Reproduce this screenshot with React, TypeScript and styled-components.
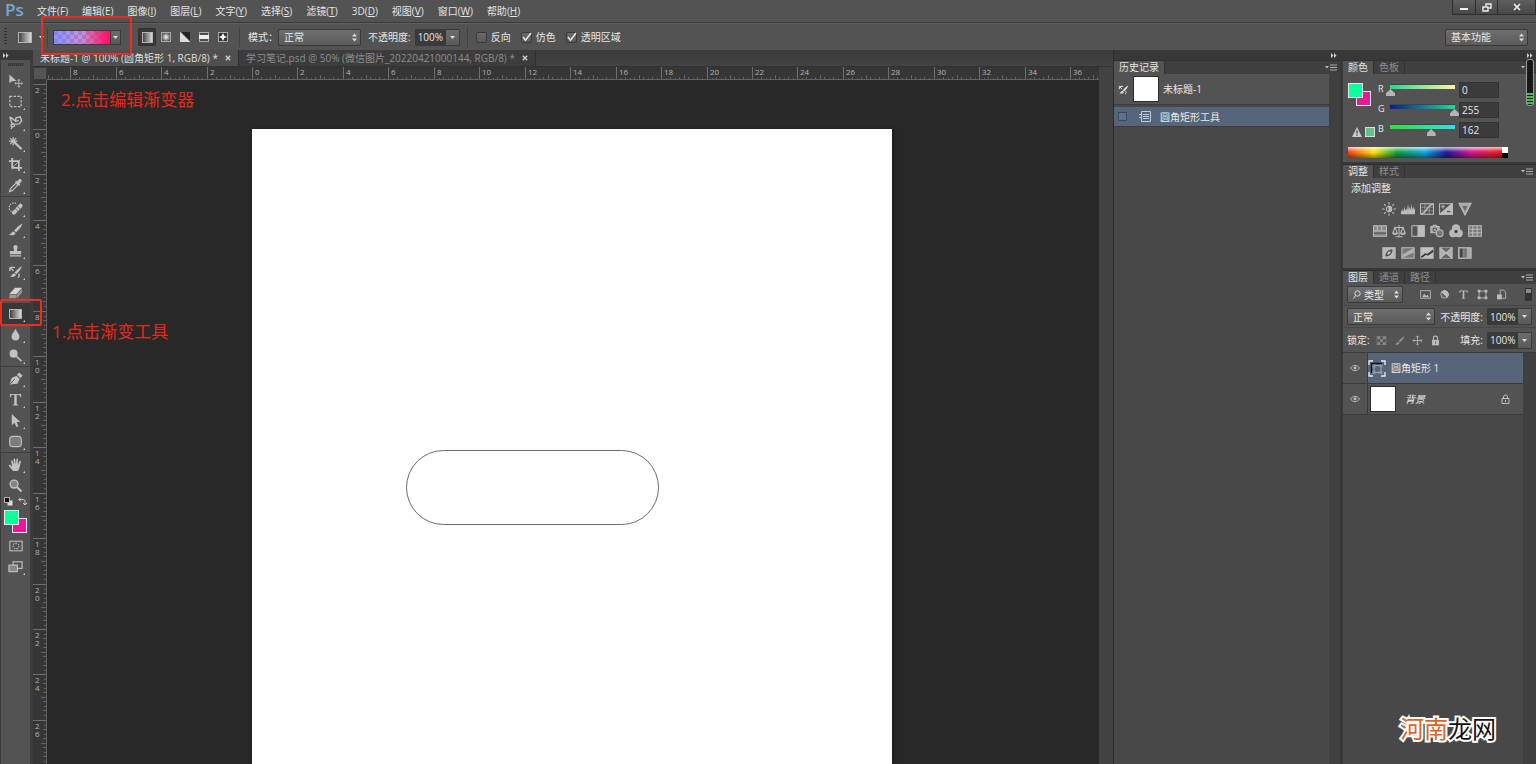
import React, { useEffect, useRef, useState } from 'react';
import styled, { createGlobalStyle, css } from 'styled-components';

const GlobalStyle = createGlobalStyle`
  * { box-sizing: border-box; }
  html, body, #root { height: 100%; }
  body {
    margin: 0;
    background: #282828;
    overflow: hidden;
  }
  body, button, input, select {
    font-family: 'Open Sans', 'Noto Sans CJK SC', sans-serif;
    font-size: 10px;
    line-height: 14px;
    color: #e8e8e8;
  }
  button { padding: 0; border: 0; background: none; }
  svg { display: block; }
`;

/* ---------- page frame ---------- */

const Screen = styled.div`
  position: relative;
  display: flex;
  flex-direction: column;
  min-height: 100vh;
  height: 100%;
  overflow: hidden;
`;

const MenuBar = styled.header`
  display: flex;
  align-items: flex-start;
  height: 23px;
  flex: none;
  padding-left: 5px;
  background: #535353;
  border-bottom: 1px solid #3a3a3a;
`;

const Logo = styled.span`
  width: 27px;
  margin-right: 5px;
  font-family: 'Open Sans', sans-serif;
  font-size: 17px;
  font-weight: 600;
  line-height: 20px;
  color: #78a9d6;
`;

const Menus = styled.nav`
  display: flex;
  gap: 14px;
  flex: 1;
`;

const MenuButton = styled.button`
  line-height: 22px;
  color: #e4e4e4;
  white-space: nowrap;
`;

const WindowControls = styled.div`
  display: flex;
  height: 15px;
  border: 1px solid #2e2e2e;
  border-top: 0;
`;

const WindowButton = styled.button<{ $wide?: boolean }>`
  display: grid;
  place-items: center;
  width: ${(p) => (p.$wide ? 38 : 22)}px;
  background: linear-gradient(#5e5e5e, #484848);
  & + & { border-left: 1px solid #2e2e2e; }
`;

const OptionsBar = styled.div`
  display: flex;
  align-items: center;
  height: 27px;
  flex: none;
  padding: 0 8px 0 4px;
  background: #535353;
  border-top: 1px solid #5f5f5f;
`;

const Divider = styled.i<{ $before: number; $after: number }>`
  width: 1px;
  height: 20px;
  margin: 0 ${(p) => p.$after}px 0 ${(p) => p.$before}px;
  background: #424242;
`;

const Grip = styled.i`
  width: 3px;
  height: 18px;
  margin-right: 11px;
  background: repeating-linear-gradient(#333 0 1px, #535353 1px 3px);
`;

const ToolPreset = styled.button`
  display: flex;
  align-items: center;
  gap: 7px;
`;

const GradientPicker = styled.div`
  display: flex;
  height: 15px;
  border: 1px solid #3a3a3a;
`;

const GradientButton = styled.button`
  width: 56px;
  background:
    linear-gradient(90deg, rgba(118, 130, 255, 0.85), rgba(180, 110, 210, 0.75) 50%, #fb1a6c 92%, #ff1466),
    repeating-conic-gradient(#fff 0 25%, #9a9a9a 0 50%) 0 0 / 8px 8px;
`;

const ArrowButton = styled.button<{ $w: number }>`
  display: grid;
  place-items: center;
  flex: none;
  width: ${(p) => p.$w}px;
  background: linear-gradient(#6c6c6c, #5a5a5a);
  border-left: 1px solid #3a3a3a;
`;

const StyleButtons = styled.div`
  display: flex;
  margin-left: 17px;
  gap: 1px;
`;

const StyleButton = styled.button<{ $active?: boolean }>`
  display: grid;
  place-items: center;
  width: 18px;
  height: 18px;
  border-radius: 2px;
  ${(p) => p.$active && css`background: #383838; box-shadow: inset 0 0 0 1px #303030;`}
`;

const FieldLabel = styled.label`
  white-space: nowrap;
`;

const OptionLabel = styled(FieldLabel)`
  margin: 0 4px 0 7px;
`;

const SelectFrame = styled.span<{ $w: number }>`
  display: grid;
  align-items: center;
  flex: none;
  width: ${(p) => p.$w}px;
  height: 17px;
  border: 1px solid #3a3a3a;
  border-radius: 2px;
  background: linear-gradient(#6e6e6e, #5b5b5b);
  > * { grid-area: 1 / 1; }
  > svg { justify-self: end; margin-right: 2px; pointer-events: none; }
  > svg.lead { justify-self: start; margin-left: 5px; }
`;

const SelectBox = styled.select<{ $pad: number }>`
  appearance: none;
  width: 100%;
  height: 15px;
  padding: 0 0 0 ${(p) => p.$pad}px;
  border: 0;
  background: none;
`;

const ValueFrame = styled.span`
  display: flex;
  flex: none;
  height: 17px;
  border: 1px solid #3a3a3a;
  border-radius: 1px;
`;

const ValueInput = styled.input`
  width: 29px;
  padding: 0 0 0 2px;
  border: 0;
  background: #3a3a3a;
`;

const CheckLabel = styled.label`
  display: flex;
  align-items: center;
  gap: 4px;
  margin-right: 10px;
  white-space: nowrap;
`;

const CheckFrame = styled.span`
  display: grid;
  > * { grid-area: 1 / 1; }
  > svg { pointer-events: none; }
`;

const CheckInput = styled.input`
  appearance: none;
  width: 11px;
  height: 11px;
  margin: 0;
  border: 1px solid #3a3a3a;
  border-radius: 2px;
  background: linear-gradient(#6a6a6a, #595959);
`;

const Spacer = styled.i`
  flex: 1;
`;

const Workspace = styled.div`
  display: flex;
  flex: 1;
  min-height: 0;
`;

/* ---------- tool bar ---------- */

const ToolColumn = styled.aside`
  display: flex;
  flex-direction: column;
  width: 33px;
  flex: none;
  background: #3c3c3c;
`;

const Strip = styled.div<{ $end?: boolean }>`
  display: flex;
  align-items: center;
  justify-content: ${(p) => (p.$end ? 'flex-end' : 'flex-start')};
  height: 10px;
  flex: none;
  padding: 0 3px;
  background: #383838;
`;

const ToolPanel = styled.div`
  flex: 1;
  display: flex;
  flex-direction: column;
  align-items: center;
  margin: 0 3px 0 1px;
  padding-top: 3px;
  background: #535353;
  overflow: hidden;
`;

const ToolGrip = styled.i`
  width: 16px;
  height: 3px;
  margin-bottom: 4px;
  background: repeating-linear-gradient(90deg, #333 0 1px, #474747 1px 2px);
`;

const ToolGroup = styled.div`
  align-self: stretch;
  & + & { border-top: 1px solid #404040; padding-top: 1px; }
`;

const ToolButton = styled.button<{ $active?: boolean }>`
  position: relative;
  display: grid;
  place-items: center;
  width: 100%;
  height: 21px;
  color: #c2c2c2;
  ${(p) => p.$active && css`background: #383838;`}
`;

const Flyout = styled.i`
  position: absolute;
  right: 5px;
  bottom: 2px;
  border: 1px solid #d0d0d0;
  border-top-color: transparent;
  border-left-color: transparent;
`;

const MiniRow = styled.div`
  display: flex;
  gap: 5px;
  padding: 1px 0 4px;
`;

const SwatchPair = styled.div`
  position: relative;
  flex: none;
  width: 23px;
  height: 23px;
`;

const ToolSwatches = styled(SwatchPair)`
  margin-bottom: 2px;
`;

const Swatch = styled.button<{ $color: string; $back?: boolean }>`
  position: absolute;
  ${(p) => (p.$back ? 'right: 0; bottom: 0;' : 'left: 0; top: 0; z-index: 1;')}
  width: 15px;
  height: 15px;
  border: 1px solid #e8e8e8;
  background: ${(p) => p.$color};
`;

/* ---------- document ---------- */

const DocumentColumn = styled.main`
  display: flex;
  flex-direction: column;
  flex: 1;
  min-width: 0;
  background: #424242;
`;

const TabBar = styled.div`
  display: flex;
  height: 17px;
  flex: none;
  background: linear-gradient(#3a3a3a, #424242);
  border-bottom: 1px solid #323232;
`;

const DocTab = styled.div<{ $active?: boolean }>`
  display: flex;
  align-items: center;
  gap: 7px;
  padding: 0 7px;
  border-right: 1px solid #303030;
  background: ${(p) => (p.$active ? '#4f4f4f' : '#3c3c3c')};
  color: ${(p) => (p.$active ? '#dedede' : '#8d8d8d')};
  white-space: nowrap;
`;

const DocTitle = styled.span`
  line-height: 16px;
`;

const Stage = styled.div`
  flex: 1;
  min-height: 0;
  display: grid;
  grid-template: 13px 1fr / 14px 1fr;
  margin-right: 14px;
  background: #282828;
`;

const RulerCorner = styled.i`
  background: #555;
  border: 1px solid #3a3a3a;
`;

const RulerFrame = styled.div`
  min-width: 0;
  min-height: 0;
  overflow: hidden;
  background: #363636;
`;

const CanvasArea = styled.div`
  min-width: 0;
  min-height: 0;
  overflow: hidden;
  display: flex;
  padding: 49px 0 0 205px;
`;

const Page = styled.div`
  position: relative;
  flex: none;
  width: 640px;
  background: #fff;
  box-shadow: 1px 0 3px #161616;
`;

const ShapePath = styled.svg`
  position: absolute;
  left: 154px;
  top: 321px;
`;

/* ---------- panels ---------- */

const Dock = styled.aside`
  display: flex;
  flex: none;
  gap: 3px;
  border-left: 1px solid #2c2c2c;
  background: #383838;
`;

const DockColumn = styled.div<{ $w: number }>`
  display: flex;
  flex-direction: column;
  width: ${(p) => p.$w}px;
`;

const PanelTabs = styled.div<{ $gap?: boolean }>`
  display: flex;
  height: 14px;
  flex: none;
  margin-top: ${(p) => (p.$gap ? 2 : 0)}px;
  background: #3f3f3f;
  border-top: 1px solid #303030;
`;

const PanelTab = styled.button<{ $active?: boolean }>`
  padding: 0 5px;
  line-height: 13px;
  border-right: 1px solid #333;
  background: ${(p) => (p.$active ? '#535353' : 'none')};
  color: ${(p) => (p.$active ? '#e4e4e4' : '#8f8f8f')};
`;

const PanelMenu = styled.button`
  margin: 0 3px 0 auto;
`;

const HistoryBody = styled.div`
  flex: 1;
  padding-right: 11px;
  background: linear-gradient(90deg, #484848 calc(100% - 11px), #404040 0);
`;

const HistoryRow = styled.div<{ $active?: boolean }>`
  display: flex;
  align-items: center;
  height: ${(p) => (p.$active ? 20 : 31)}px;
  margin-bottom: 2px;
  padding-left: 4px;
  border-bottom: 1px solid #3c3c3c;
  background: ${(p) => (p.$active ? '#56657a' : '#535353')};
`;

const HistorySource = styled.button<{ $empty?: boolean }>`
  width: ${(p) => (p.$empty ? 9 : 11)}px;
  height: ${(p) => (p.$empty ? 9 : 11)}px;
  ${(p) => p.$empty && css`border: 1px solid #3c4a5e; background: #607087;`}
`;

const Thumb = styled.i`
  width: 26px;
  height: 26px;
  border: 1px solid #2c2c2c;
  background: #fff;
`;

const SnapshotThumb = styled(Thumb)`
  margin: 0 4px;
`;

const StateIcon = styled.svg`
  margin: 0 9px 0 12px;
`;

const ColorPanel = styled.section`
  display: grid;
  grid-template-columns: 23px 1fr;
  column-gap: 7px;
  padding: 9px 28px 4px 5px;
  background: #535353;
`;

const SwatchColumn = styled.div`
  display: flex;
  flex-direction: column;
  justify-content: space-between;
  height: 54px;
`;

const GamutRow = styled.div`
  display: flex;
  align-items: center;
  gap: 3px;
  margin-left: 4px;
  > * { flex: none; }
`;

const GamutSwatch = styled.button`
  width: 10px;
  height: 10px;
  border: 1px solid #ddd;
  background: #66c08c;
`;

const Channels = styled.div`
  display: flex;
  flex-direction: column;
  margin-top: -1px;
  gap: 4px;
`;

const ChannelRow = styled.div`
  display: flex;
  align-items: flex-start;
  height: 16px;
`;

const ChannelLabel = styled.label`
  width: 12px;
  font-size: 9px;
  line-height: 13px;
`;

const SliderBox = styled.span`
  width: 65px;
  margin: 2px 4px 0 0;
`;

const SliderBar = styled.i<{ $from: string; $to: string }>`
  display: block;
  height: 5px;
  background: linear-gradient(90deg, ${(p) => p.$from}, ${(p) => p.$to});
  border-top: 1px solid #444;
`;

const Slider = styled.input`
  appearance: none;
  display: block;
  width: 73px;
  height: 7px;
  margin: 0 -4px;
  background: none;
  &::-webkit-slider-thumb {
    appearance: none;
    width: 9px;
    height: 7px;
    background: #b4b4b4;
    clip-path: polygon(50% 0, 100% 60%, 100% 100%, 0 100%, 0 60%);
  }
`;

const ChannelInput = styled.input`
  width: 40px;
  height: 16px;
  padding: 0 0 0 2px;
  border: 1px solid #333;
  background: #3b3b3b;
`;

const Spectrum = styled.div`
  grid-column: 1 / -1;
  display: flex;
  height: 11px;
  margin-top: 9px;
`;

const SpectrumRamp = styled.i`
  flex: 1;
  background:
    linear-gradient(rgba(255, 255, 255, 0.75), rgba(255, 255, 255, 0) 45%, rgba(0, 0, 0, 0) 50%, rgba(0, 0, 0, 0.45)),
    linear-gradient(90deg, #f5401e, #f8e80a 17%, #10a040 32%, #12a6e0 50%, #241c98 64%, #d81492 80%, #e8203a 93%, #e01818);
`;

const SpectrumEnds = styled.i`
  width: 6px;
  background: linear-gradient(#fff 50%, #000 50%);
`;

const AdjustPanel = styled.section`
  padding: 3px 8px 8px 8px;
  background: #535353;
`;

const AdjustTitle = styled.h2`
  margin: 0 0 7px;
  font-size: 10px;
  font-weight: 400;
  line-height: 14px;
`;

const AdjustRow = styled.div<{ $inset: number }>`
  display: flex;
  gap: 5px;
  padding-left: ${(p) => p.$inset}px;
  margin-bottom: 8px;
  &:last-child { margin-bottom: 0; }
`;

const IconButton = styled.button`
  display: grid;
  place-items: center;
  flex: none;
  width: 14px;
  height: 14px;
  color: #bcbcbc;
`;

const LayerTools = styled.div`
  display: flex;
  align-items: center;
  height: 22px;
  flex: none;
  padding: 0 4px;
  background: #535353;
  border-bottom: 1px solid #484848;
`;

const LockTools = styled(LayerTools)`
  height: 25px;
  border-bottom-color: #3a3a3a;
`;

const IconStrip = styled.div<{ $before: number; $gap: number }>`
  display: flex;
  gap: ${(p) => p.$gap}px;
  margin-left: ${(p) => p.$before}px;
`;

const FilterSwitch = styled.button`
  width: 7px;
  height: 13px;
  margin: 0 0 0 auto;
  border: 1px solid #333;
  background: linear-gradient(#8a8a8a 40%, #333 40%);
`;

const LayerLabel = styled(FieldLabel)`
  margin: 0 4px 0 auto;
`;

const LayerList = styled.div`
  flex: 1;
  padding-right: 13px;
  background: linear-gradient(90deg, #484848 calc(100% - 13px), #404040 0);
`;

const LayerRow = styled.div<{ $active?: boolean }>`
  display: flex;
  align-items: center;
  height: 31px;
  border-bottom: 1px solid #3a3a3a;
  background: ${(p) =>
    p.$active ? 'linear-gradient(90deg, #535353 24px, #56657a 24px)' : '#535353'};
`;

const EyeButton = styled.button`
  display: grid;
  place-items: center;
  width: 25px;
  height: 30px;
  border-right: 1px solid #3a3a3a;
`;

const LayerName = styled.span<{ $italic?: boolean }>`
  flex: 1;
  margin-left: ${(p) => (p.$italic ? 9 : 5)}px;
  font-style: ${(p) => (p.$italic ? 'italic' : 'normal')};
`;

const LayerLock = styled.i`
  margin-right: 13px;
`;

const LayerThumb = styled(Thumb)`
  margin-left: 2px;
`;

/* ---------- overlays ---------- */

const Highlight = styled.div<{ $x: number; $y: number; $w: number; $h: number }>`
  position: absolute;
  z-index: 5;
  left: ${(p) => p.$x}px;
  top: ${(p) => p.$y}px;
  width: ${(p) => p.$w}px;
  height: ${(p) => p.$h}px;
  border: 2px solid #ea2f22;
  border-radius: 2px;
  pointer-events: none;
`;

const Note = styled.p<{ $x: number; $y: number }>`
  position: absolute;
  z-index: 5;
  left: ${(p) => p.$x}px;
  top: ${(p) => p.$y}px;
  margin: 0;
  font-size: 17px;
  line-height: 24px;
  color: #e5281d;
`;

const Meter = styled.div`
  position: absolute;
  z-index: 5;
  right: 2px;
  top: 59px;
  width: 8px;
  height: 47px;
  border: 1px solid #9a9a9a;
  border-radius: 3px;
  background:
    repeating-linear-gradient(rgba(0, 0, 0, 0) 0 2px, #1c1c1c 2px 3px),
    linear-gradient(#161616 32px, #3fc152 32px);
`;

const Watermark = styled.div`
  position: absolute;
  z-index: 5;
  right: 40px;
  bottom: 19px;
  font-size: 24px;
  line-height: 32px;
  color: #111;
  -webkit-text-stroke: 4px #fff;
  stroke-linejoin: round;
  paint-order: stroke fill;
  > b { font-weight: 400; color: #e2631f; }
`;

/* ---------- small drawings ---------- */

const Icon = ({ size = 16, children }: { size?: number; children: React.ReactNode }) => (
  <svg width={size} height={size} viewBox="0 0 16 16" fill="none" stroke="currentColor" strokeWidth="1.2" aria-hidden="true">
    {children}
  </svg>
);

const DownArrow = () => (
  <svg width="5" height="3" viewBox="0 0 5 3" aria-hidden="true"><path d="M0 0h5L2.5 3z" fill="#ddd" /></svg>
);

const UpDown = () => (
  <svg width="7" height="9" viewBox="0 0 7 9" aria-hidden="true"><path d="M1 3.5h5L3.5.5zM1 5.5h5L3.5 8.5z" fill="#ddd" /></svg>
);

const DoubleChevron = () => (
  <svg width="6" height="5" viewBox="0 0 6 5" aria-hidden="true"><path d="M0 0l2.5 2.5L0 5zM3 0l2.5 2.5L3 5z" fill="#ccc" /></svg>
);

const PanelMenuIcon = () => (
  <svg width="12" height="7" viewBox="0 0 12 7" aria-hidden="true">
    <path d="M0 2h4L2 4.5z" fill="#bbb" />
    <path d="M5 1h7M5 3.5h7M5 6h7" stroke="#aaa" strokeWidth="1" />
  </svg>
);

const CloseMark = () => (
  <svg width="6" height="6" viewBox="0 0 6 6" aria-hidden="true"><path d="M.8.8l4.4 4.4M5.2.8L.8 5.2" stroke="#d0d0d0" strokeWidth="1.3" /></svg>
);

const GradientGlyph = ({ id, w = 14, h = 11 }: { id: string; w?: number; h?: number }) => (
  <svg width={w} height={h} viewBox={`0 0 ${w} ${h}`} aria-hidden="true">
    <defs><linearGradient id={id}><stop offset="0" stopColor="#3c3c3c" /><stop offset="1" stopColor="#e0e0e0" /></linearGradient></defs>
    <rect x=".5" y=".5" width={w - 1} height={h - 1} fill={`url(#${id})`} stroke="#b4b4b4" />
  </svg>
);

const HistoryBrush = () => (
  <>
    <path d="M15 2c-3.500 2-6 4.500-8 7.300l1.800 1.500C11.500 8.500 13.800 5.500 15 2z" fill="currentColor" stroke="none" />
    <path d="M6.500 10c-2.200 0-2 2.500-4.500 3 2.500 1.500 6 .8 6.500-1.500z" fill="currentColor" stroke="none" />
    <path d="M2 3.500h5.500M2 3.500v4M2.500 4l3.500 3.500M11 10.500c1.500 1 1.200 3-.5 4" strokeWidth="1.400" />
  </>
);

const BrushShape = () => (
  <>
    <path d="M15.500 1.500C11 4 8.300 6.700 6.600 9.200l2 1.600C11.500 8.500 14 5.500 15.500 1.500z" fill="currentColor" stroke="none" />
    <path d="M6 10c-2.200 0-2 2.800-5 3.200C4 15 7.500 14 8 11.600z" fill="currentColor" stroke="none" />
  </>
);

type Tool = { name: string; flyout?: boolean; active?: boolean; art: React.ReactNode };

const toolGroups: Tool[][] = [
  [
    { name: '移动工具', art: <><path d="M1.500 1.500v9.500l2.500-2.300 5-.5z" fill="currentColor" stroke="none" /><path d="M11.500 7v8M7.500 11h8M10.300 8.200l1.200-1.400 1.200 1.400M10.300 13.800l1.200 1.400 1.200-1.400M8.700 9.800L7.300 11l1.400 1.200M14.300 9.800l1.400 1.200-1.400 1.200" strokeWidth=".9" /></> },
    { name: '矩形选框工具', flyout: true, art: <rect x="2" y="2.500" width="12" height="11" strokeDasharray="2.500 1.500" strokeWidth="1.300" /> },
    { name: '套索工具', flyout: true, art: <path d="M2 2l2.500 8L12 9.500l2.500-3.500L13 2 8.500 3 8 6.500 2 2M5.500 9.500c-3 0-3 3-.5 3s2.500-3 .5-3M4.500 12.500L3.500 15M8.500 6.500l3-.5" strokeWidth="1.500" /> },
    { name: '魔棒工具', flyout: true, art: <><path d="M6.500 6.500l8 7.500" strokeWidth="2.200" /><path d="M5.500 1v9M1 5.500h9M2.300 2.300l6.400 6.400M8.700 2.300L2.300 8.700" strokeWidth="1.300" /></> },
    { name: '裁剪工具', flyout: true, art: <><path d="M4.500 1v10.500H15M1 4.500h10.500V15" strokeWidth="1.900" /><path d="M5 11l8.500-8.500" strokeWidth=".8" /></> },
    { name: '吸管工具', flyout: true, art: <><path d="M1.500 14.500l1-3 6-6 2 2-6 6z" /><path d="M7.500 4l4.500 4.500 1.200-1.200-1-1.200 2-2c1.400-1.800-.9-3.900-2.600-2.400l-2 1.900L8.700 2.800z" fill="currentColor" stroke="none" /></> },
  ],
  [
    { name: '污点修复画笔', flyout: true, art: <><path d="M4.500 11.500l8-8.500c1.200-1 4 1.400 2.800 3L7.500 14.200c-1.600 1.300-4.400-1-3-2.700z" fill="currentColor" stroke="none" /><path d="M7.500 8l3.500 3.300M10 5.500L13.200 9" stroke="#535353" strokeWidth=".8" /><path d="M8.500 2.500C5 .5 1 4 1.300 7.500c.2 2 1.200 3 2.500 3.500" strokeDasharray="1.500 1.200" /></> },
    { name: '画笔工具', flyout: true, art: <BrushShape /> },
    { name: '仿制图章', flyout: true, art: <path d="M6.500 8.500L5.800 5C5.300 1.200 10.700 1.200 10.200 5l-.7 3.500H14V12H2V8.500zM2 13h12v1.500H2z" fill="currentColor" stroke="none" /> },
    { name: '历史记录画笔', flyout: true, art: <HistoryBrush /> },
    { name: '橡皮擦工具', flyout: true, art: <><path d="M1.500 9.500L7.500 3H15L9.300 9.500z" fill="#d4d4d4" stroke="none" /><path d="M1.500 10H9v4H1.500zM9.500 10.300L15 4v4l-5.500 6z" fill="#989898" stroke="none" /></> },
    { name: '渐变工具', flyout: true, active: true, art: null },
    { name: '模糊工具', flyout: true, art: <path d="M8 1.500C7 5 3.800 7 3.800 10.200a4.200 4.200 0 008.400 0C12.200 7 9 5 8 1.500z" fill="currentColor" stroke="none" /> },
    { name: '减淡工具', flyout: true, art: <><circle cx="6" cy="6" r="4.300" fill="currentColor" stroke="none" /><path d="M9 9l5.500 5" strokeWidth="1.800" /></> },
  ],
  [
    { name: '钢笔工具', flyout: true, art: <><path d="M1.500 14.500L4 7.500l5-2.500 3.500 3.500-2.500 5z" fill="currentColor" stroke="none" /><path d="M2 14l5-5" stroke="#444" strokeWidth=".9" /><path d="M9.500 4l2.500-2.500 3.500 3.500-2.500 2.500z" fill="currentColor" stroke="none" /></> },
    { name: '横排文字工具', flyout: true, art: <path d="M2 2h12v3.500h-.8C12.900 3.600 12 3 9.300 3v9.500c0 .9.500 1.100 1.700 1.200v.6H5v-.6c1.200-.1 1.700-.3 1.700-1.200V3C4 3 3.100 3.600 2.800 5.500H2z" fill="currentColor" stroke="none" /> },
    { name: '路径选择工具', flyout: true, art: <path d="M4 1v12.300l2.900-2.900 2.100 4.500 2.100-.9-2-4.500h4z" fill="currentColor" stroke="none" /> },
    { name: '圆角矩形工具', flyout: true, art: <rect x="1.800" y="2.500" width="12.400" height="11" rx="3.500" fill="#7c7c7c" /> },
  ],
  [
    { name: '抓手工具', flyout: true, art: <path d="M5.500 15L1 9.500c-.6-1 .7-1.700 1.500-1l2 1.700L3.300 4.500c-.2-1.200 1.300-1.400 1.600-.3L6.300 8 6 2.500c0-1.300 1.600-1.300 1.700 0L8.300 8l.7-5.700c.2-1.200 1.700-1 1.600.2L10.300 8.500l1.800-4c.5-1 1.900-.5 1.600.6-1 3.500-1 7-3.200 9.900z" fill="currentColor" stroke="none" /> },
    { name: '缩放工具', art: <><circle cx="6.500" cy="6.500" r="4.200" fill="#858585" strokeWidth="1.500" /><path d="M9.800 9.800l4.700 4.500" strokeWidth="2.300" /></> },
  ],
];

const adjustRows: { inset: number; items: [string, React.ReactNode][] }[] = [
  {
    inset: 31,
    items: [
      ['亮度/对比度', <><circle cx="8" cy="8" r="3" /><path d="M8 5v6a3 3 0 000-6z" fill="currentColor" /><path d="M8 0v3M8 13v3M0 8h3M13 8h3M2.300 2.300l2 2M11.700 11.700l2 2M2.300 13.700l2-2M11.700 4.300l2-2" /></>],
      ['色阶', <path d="M0 14V9l1 2 1-4 1 4 1-6 1 5 1-3 1 3 1-8 1 7 1-4 1 4 1-7 1 7 1-4 1 4 1-3v8z" fill="currentColor" stroke="none" />],
      ['曲线', <><rect x=".6" y="2" width="14.800" height="12" /><path d="M.6 6h14.800M.6 10h14.800M5.500 2v12M10.500 2v12" strokeWidth=".6" /><path d="M1 13.500C8 13 8 3 15 2.500" strokeWidth="1.600" /></>],
      ['曝光度', <><rect x=".6" y="2" width="14.800" height="12" /><path d="M15 2v12H1z" fill="currentColor" /><path d="M2.500 5.500h4M4.500 3.500v4" /><path d="M9 11h4" stroke="#444" /></>],
      ['自然饱和度', <><path d="M1 1.500h14L8 15z" fill="#a8a8a8" /><path d="M5 4.500h6L8 10.500z" fill="#6a6a6a" stroke="none" /></>],
    ],
  },
  {
    inset: 22,
    items: [
      ['色相/饱和度', <><rect x=".6" y="2" width="14.800" height="12" fill="#8a8a8a" /><path d="M1 8h14M5 2v6M10 2v6" /><path d="M1 10.500h14" stroke="#666" strokeWidth="2" /></>],
      ['色彩平衡', <path d="M8 1v13M4 14.500h8M2.500 4h11M3.500 4L.8 10.500h5.400zM12.500 4l-2.700 6.500h5.400zM1 10.500c.8 2 4.200 2 5 0M10 10.500c.8 2 4.200 2 5 0" />],
      ['黑白', <><rect x="1" y="2" width="14" height="12" /><path d="M8 2h7v12H8z" fill="currentColor" /></>],
      ['照片滤镜', <><path d="M1 3h2l1-1.500h3L8 3h2.500v7H1z" fill="#a8a8a8" /><circle cx="5.500" cy="6.500" r="2" stroke="#555" /><circle cx="11" cy="10.500" r="4" fill="#777" /></>],
      ['通道混合器', <><circle cx="8" cy="5" r="4" fill="#b8b8b8" /><circle cx="4.800" cy="10.500" r="4" fill="#b8b8b8" /><circle cx="11.200" cy="10.500" r="4" fill="#b8b8b8" /><circle cx="8" cy="8.700" r="2" fill="#444" stroke="none" /></>],
      ['颜色查找', <><rect x=".8" y="2" width="14.400" height="12" fill="#777" /><path d="M1 6h14M1 10h14M5.500 2v12M10.500 2v12" /></>],
    ],
  },
  {
    inset: 31,
    items: [
      ['反相', <><rect x="1" y="2" width="14" height="12" fill="#b8b8b8" /><path d="M4 12c0-5 3-8 8-8 0 5-3 8-8 8z" fill="#4a4a4a" stroke="none" /><path d="M6 10c0-2.500 1.500-4 4-4 0 2.500-1.500 4-4 4z" fill="#ccc" stroke="none" /></>],
      ['色调分离', <><rect x="1" y="2" width="14" height="12" fill="#777" /><path d="M1 10L15 2v5L1 14z" fill="#b0b0b0" stroke="none" /></>],
      ['阈值', <><rect x="1" y="2" width="14" height="12" fill="#c0c0c0" /><path d="M1 12l5-4 2 1 7-5v3l-6 4-2-1-4 3H1z" fill="#3c3c3c" stroke="none" /></>],
      ['可选颜色', <><rect x="1" y="2" width="14" height="12" fill="#b0b0b0" /><path d="M2 2h12L8 8zM2 14h12L8 8z" fill="#666" stroke="none" /><path d="M1 2l14 12M15 2L1 14" /></>],
      ['渐变映射', <><path d="M1 2h5v12H1z" fill="#444" /><path d="M6 2h4v12H6z" fill="#777" stroke="none" /><path d="M10 2h5v12h-5z" fill="#aaa" stroke="none" /><rect x="1" y="2" width="14" height="12" /></>],
    ],
  },
];

const filterIcons: [string, React.ReactNode][] = [
  ['像素图层', <><rect x="1" y="2.500" width="14" height="11" /><path d="M3 12l3-5 3 3 2-1.500 2.500 3.500z" fill="currentColor" stroke="none" /></>],
  ['调整图层', <><circle cx="8" cy="8" r="5.500" fill="#666" /><path d="M4 4a5.600 5.600 0 018 8z" fill="currentColor" /></>],
  ['文字图层', <path d="M2 2h12v3.500h-.8C12.900 3.800 12 3.400 9.200 3.400v9.200c0 .8.500 1 1.600 1.100v.6H5.200v-.6c1.100-.1 1.600-.3 1.600-1.100V3.400C4 3.400 3.100 3.800 2.800 5.500H2z" fill="currentColor" stroke="none" />],
  ['形状图层', <><rect x="3" y="3" width="10" height="10" /><path d="M1 1h4v4H1zM11 1h4v4h-4zM1 11h4v4H1zM11 11h4v4h-4z" fill="currentColor" stroke="none" /></>],
  ['智能对象', <><path d="M6 1.500h5l3 3v9H6z" /><path d="M1.500 8h7v7h-7z" fill="currentColor" stroke="none" /></>],
];

const lockIcons: [string, React.ReactNode][] = [
  ['锁定透明像素', <><rect x="1.500" y="2" width="13" height="12" stroke="#777" /><path d="M2 2h4v4H2zM10 2h4v4h-4zM6 6h4v4H6zM2 10h4v4H2zM10 10h4v4h-4z" fill="#8a8a8a" stroke="none" /></>],
  ['锁定图像像素', <g color="#909090"><BrushShape /></g>],
  ['锁定位置', <path d="M8 1.500v13M1.500 8h13M6 3.500l2-2.300 2 2.300M6 12.500l2 2.300 2-2.300M3.500 6L1.200 8l2.300 2M12.500 6l2.300 2-2.300 2" />],
  ['锁定全部', <><path d="M3 7h10v8H3z" fill="currentColor" stroke="none" /><path d="M5 7V4.500a3 3 0 016 0V7" strokeWidth="1.600" /><path d="M8 9.500v3" stroke="#444" /></>],
];

const menus: [string, string][] = [
  ['文件', 'F'], ['编辑', 'E'], ['图像', 'I'], ['图层', 'L'], ['文字', 'Y'], ['选择', 'S'],
  ['滤镜', 'T'], ['3D', 'D'], ['视图', 'V'], ['窗口', 'W'], ['帮助', 'H'],
];

/* Rulers count every two centimetres; one step is 500 px over 11 steps. */
const STEP = 500 / 11;

/* Keeps the marks limited to the part of the ruler that is on screen. */
function useLength(axis: 'width' | 'height') {
  const ref = useRef<HTMLDivElement>(null);
  const [length, setLength] = useState(0);
  useEffect(() => {
    const node = ref.current;
    if (!node) return;
    const measure = () => setLength(Math.floor(node.getBoundingClientRect()[axis]));
    measure();
    const observer = new ResizeObserver(measure);
    observer.observe(node);
    return () => observer.disconnect();
  }, [axis]);
  return [ref, length] as const;
}

const marksBetween = (zero: number, length: number) => {
  const marks: { at: number; label: number; labelled: boolean }[] = [];
  for (let n = Math.floor(-zero / STEP); zero + n * STEP < length; n++) {
    const at = Math.round(zero + n * STEP);
    marks.push({ at, label: Math.abs(n) * 2, labelled: at >= 0 && at + 20 < length });
  }
  return marks;
};

const tickDepth = (k: number) => (k === 5 ? 8 : k % 2 ? 11 : 10);
const TICKS = [1, 2, 3, 4, 5, 6, 7, 8, 9];

const HorizontalRuler = () => {
  const [ref, length] = useLength('width');
  return (
    <RulerFrame ref={ref}>
      <svg width="100%" height="13" shapeRendering="crispEdges" aria-hidden="true">
        {marksBetween(205, length).map(({ at, label, labelled }) => (
          <g key={at}>
            <path d={`M${at + 0.5} 0v13`} stroke="#6e6e6e" />
            <path d={TICKS.map((k) => `M${Math.round(at + (k * STEP) / 10) + 0.5} ${tickDepth(k)}V13`).join('')} stroke="#626262" />
            {labelled && <text x={at + 3} y="8" fontSize="8" fill="#b4b4b4">{label}</text>}
          </g>
        ))}
        <path d={`M0 12.500h${length}`} stroke="#626262" />
      </svg>
    </RulerFrame>
  );
};

const VerticalRuler = () => {
  const [ref, length] = useLength('height');
  return (
    <RulerFrame ref={ref}>
      <svg width="14" height={length} shapeRendering="crispEdges" aria-hidden="true">
        {marksBetween(49, length).map(({ at, label, labelled }) => (
          <g key={at}>
            <path d={`M0 ${at + 0.5}h14`} stroke="#6e6e6e" />
            <path d={TICKS.map((k) => `M${tickDepth(k)} ${Math.round(at + (k * STEP) / 10) + 0.5}H14`).join('')} stroke="#626262" />
            {labelled &&
              String(label).split('').map((d, i) => (
                <text key={i} x="2" y={at + 9 + i * 8} fontSize="8" fill="#b4b4b4">{d}</text>
              ))}
          </g>
        ))}
        <path d={`M13.500 0v${length}`} stroke="#626262" />
      </svg>
    </RulerFrame>
  );
};

const Dropdown = ({ label, value, width, icon, id }: { label: string; value: string; width: number; icon?: boolean; id: string }) => (
  <SelectFrame $w={width}>
    <SelectBox id={id} aria-label={label} $pad={icon ? 16 : 5} defaultValue={value}>
      <option>{value}</option>
    </SelectBox>
    {icon && (
      <svg className="lead" width="8" height="9" viewBox="0 0 8 9" fill="none" stroke="#ddd" aria-hidden="true">
        <circle cx="4.500" cy="3.500" r="2.700" /><path d="M2.500 5.500L.5 8.500" />
      </svg>
    )}
    <UpDown />
  </SelectFrame>
);

const Percent = ({ id, label }: { id: string; label: string }) => (
  <ValueFrame>
    <ValueInput id={id} defaultValue="100%" />
    <ArrowButton $w={14} aria-label={label}><DownArrow /></ArrowButton>
  </ValueFrame>
);

const Check = ({ text, on }: { text: string; on?: boolean }) => (
  <CheckLabel>
    <CheckFrame>
      <CheckInput type="checkbox" defaultChecked={on} />
      {on && (
        <svg width="11" height="11" viewBox="0 0 11 11" fill="none" stroke="#e8e8e8" strokeWidth="1.500" aria-hidden="true">
          <path d="M2 5l2.500 3.200L10 1" />
        </svg>
      )}
    </CheckFrame>
    {text}
  </CheckLabel>
);

const channels = [
  { name: 'R', value: 0, from: '#1edc92', to: '#fdf5a0' },
  { name: 'G', value: 255, from: '#0c1a8c', to: '#22d89a' },
  { name: 'B', value: 162, from: '#28e23c', to: '#2ce0ec' },
];

const TabsMenu = () => (
  <PanelMenu aria-label="面板菜单"><PanelMenuIcon /></PanelMenu>
);

const Eye = () => (
  <EyeButton aria-label="可见性">
    <svg width="10" height="8" viewBox="0 0 10 8" aria-hidden="true">
      <path d="M.5 4C2.500.5 7.500.5 9.500 4 7.500 7.500 2.500 7.500.5 4z" fill="none" stroke="#b8b8b8" />
      <circle cx="5" cy="3.800" r="1.600" fill="#b8b8b8" />
    </svg>
  </EyeButton>
);

export default function App() {
  return (
    <Screen>
      <GlobalStyle />
      <MenuBar>
        <Logo>Ps</Logo>
        <Menus>
          {menus.map(([text, key]) => (
            <MenuButton key={key}>{text}(<u>{key}</u>)</MenuButton>
          ))}
        </Menus>
        <WindowControls>
          <WindowButton aria-label="最小化"><svg width="8" height="8"><path d="M0 6h8" stroke="#eee" strokeWidth="2" /></svg></WindowButton>
          <WindowButton aria-label="还原">
            <svg width="10" height="9" fill="none" stroke="#eee" strokeWidth="1.400"><path d="M4 3V1h5v4H7M1 4h5v4H1z" /></svg>
          </WindowButton>
          <WindowButton $wide aria-label="关闭"><svg width="8" height="8"><path d="M1 1l6 6M7 1L1 7" stroke="#eee" strokeWidth="1.700" /></svg></WindowButton>
        </WindowControls>
      </MenuBar>

      <OptionsBar>
        <Grip />
        <ToolPreset aria-label="渐变工具"><GradientGlyph id="preset" /><DownArrow /></ToolPreset>
        <Divider $before={3} $after={5} />
        <GradientPicker>
          <GradientButton aria-label="编辑渐变" />
          <ArrowButton $w={10} aria-label="渐变拾色器"><DownArrow /></ArrowButton>
        </GradientPicker>
        <StyleButtons>
          <StyleButton $active aria-label="线性渐变"><GradientGlyph id="linear" w={11} h={11} /></StyleButton>
          <StyleButton aria-label="径向渐变">
            <svg width="10" height="10">
              <defs><radialGradient id="radial"><stop offset="0" stopColor="#fff" /><stop offset="1" stopColor="#555" /></radialGradient></defs>
              <rect x=".5" y=".5" width="9" height="9" fill="url(#radial)" stroke="#aaa" />
            </svg>
          </StyleButton>
          <StyleButton aria-label="角度渐变">
            <svg width="10" height="10"><rect width="10" height="10" fill="#999" /><path d="M0 0l10 10H0z" fill="#ddd" /><path d="M1 0h9v9z" fill="#222" /></svg>
          </StyleButton>
          <StyleButton aria-label="对称渐变">
            <svg width="10" height="10"><rect x=".5" y=".5" width="9" height="9" fill="#4a4a4a" stroke="#aaa" /><path d="M0 3h10v4H0z" fill="#eee" /></svg>
          </StyleButton>
          <StyleButton aria-label="菱形渐变">
            <svg width="10" height="10"><rect x=".5" y=".5" width="9" height="9" fill="#333" stroke="#aaa" /><path d="M5 1l1.300 2.700L9 5 6.300 6.300 5 9 3.700 6.300 1 5l2.700-1.300z" fill="#fff" /></svg>
          </StyleButton>
        </StyleButtons>
        <Divider $before={7} $after={8} />
        <FieldLabel htmlFor="mode">模式：</FieldLabel>
        <Dropdown id="mode" label="模式" value="正常" width={83} />
        <OptionLabel htmlFor="opacity">不透明度:</OptionLabel>
        <Percent id="opacity" label="不透明度滑块" />
        <Divider $before={7} $after={8} />
        <Check text="反向" />
        <Check text="仿色" on />
        <Check text="透明区域" on />
        <Spacer />
        <Dropdown id="workspace" label="工作区" value="基本功能" width={83} />
      </OptionsBar>

      <Workspace>
        <ToolColumn>
          <Strip><DoubleChevron /></Strip>
          <ToolPanel>
            <ToolGrip />
            {toolGroups.map((group, g) => (
              <ToolGroup key={g}>
                {group.map((tool) => (
                  <ToolButton key={tool.name} $active={tool.active} aria-label={tool.name}>
                    {tool.art ? <Icon size={15}>{tool.art}</Icon> : <GradientGlyph id="tool" w={13} h={10} />}
                    {tool.flyout && <Flyout />}
                  </ToolButton>
                ))}
              </ToolGroup>
            ))}
            <MiniRow>
              <svg width="9" height="9"><path d="M3.500 3.500h5v5h-5z" fill="#ddd" /><path d="M.5.5h5v5h-5z" fill="#111" stroke="#bbb" /></svg>
              <svg width="9" height="9" fill="none" stroke="#ccc"><path d="M1 2.500h4c1.500 0 2 .5 2 2V8M2.800.5L.8 2.500l2 2M5 6l2 2 2-2" /></svg>
            </MiniRow>
            <ToolSwatches>
              <Swatch $color="#0bff9d" aria-label="前景色" />
              <Swatch $color="#e9189b" $back aria-label="背景色" />
            </ToolSwatches>
            <ToolButton aria-label="快速蒙版">
              <Icon size={14}><rect x="1" y="2.500" width="14" height="11" /><circle cx="8" cy="8" r="3.300" strokeDasharray="1.700 1.200" /></Icon>
            </ToolButton>
            <ToolButton aria-label="屏幕模式">
              <Icon size={15}><rect x="5.500" y="3" width="9.500" height="7" /><rect x="1" y="6.500" width="9" height="7" fill="#888" /></Icon>
              <Flyout />
            </ToolButton>
          </ToolPanel>
        </ToolColumn>

        <DocumentColumn>
          <TabBar>
            <DocTab $active>
              <DocTitle>未标题-1 @ 100% (圆角矩形 1, RGB/8) *</DocTitle>
              <button aria-label="关闭文档"><CloseMark /></button>
            </DocTab>
            <DocTab>
              <DocTitle>学习笔记.psd @ 50% (微信图片_20220421000144, RGB/8) *</DocTitle>
              <button aria-label="关闭文档"><CloseMark /></button>
            </DocTab>
          </TabBar>
          <Stage>
            <RulerCorner />
            <HorizontalRuler />
            <VerticalRuler />
            <CanvasArea>
              <Page>
                <ShapePath width="254" height="76" aria-hidden="true">
                  <rect x=".5" y=".5" width="252" height="74" rx="37" fill="none" stroke="#6c6c6c" />
                </ShapePath>
              </Page>
            </CanvasArea>
          </Stage>
        </DocumentColumn>

        <Dock>
          <DockColumn $w={226}>
            <Strip $end><DoubleChevron /></Strip>
            <PanelTabs>
              <PanelTab $active>历史记录</PanelTab>
              <TabsMenu />
            </PanelTabs>
            <HistoryBody>
              <HistoryRow>
                <HistorySource aria-label="历史记录画笔的源"><Icon size={11}><HistoryBrush /></Icon></HistorySource>
                <SnapshotThumb />
                未标题-1
              </HistoryRow>
              <HistoryRow $active>
                <HistorySource $empty aria-label="设置源" />
                <StateIcon width="12" height="11" fill="none" stroke="#c4ccd6" aria-hidden="true">
                  <path d="M2.500.5h9v10h-9zM0 3.500h2M0 6.500h2M4 3.500h6M4 5.500h6M4 7.500h6" />
                </StateIcon>
                圆角矩形工具
              </HistoryRow>
            </HistoryBody>
          </DockColumn>

          <DockColumn $w={193}>
            <Strip $end><DoubleChevron /></Strip>
            <PanelTabs>
              <PanelTab $active>颜色</PanelTab>
              <PanelTab>色板</PanelTab>
              <TabsMenu />
            </PanelTabs>
            <ColorPanel>
              <SwatchColumn>
                <SwatchPair>
                  <Swatch $color="#0bff9d" aria-label="前景色" />
                  <Swatch $color="#e9189b" $back aria-label="背景色" />
                </SwatchPair>
                <GamutRow>
                  <svg width="10" height="10" viewBox="0 0 10 10" aria-hidden="true"><path d="M5 0l5 10H0z" fill="#ccc" /><path d="M5 3.500v3M5 7.500v1.300" stroke="#333" strokeWidth="1.200" /></svg>
                  <GamutSwatch aria-label="色域内颜色" />
                </GamutRow>
              </SwatchColumn>
              <Channels>
                {channels.map((c) => (
                  <ChannelRow key={c.name}>
                    <ChannelLabel htmlFor={`channel-${c.name}`}>{c.name}</ChannelLabel>
                    <SliderBox>
                      <SliderBar $from={c.from} $to={c.to} />
                      <Slider type="range" min={0} max={255} defaultValue={c.value} aria-label={`${c.name} 滑块`} />
                    </SliderBox>
                    <ChannelInput id={`channel-${c.name}`} defaultValue={c.value} />
                  </ChannelRow>
                ))}
              </Channels>
              <Spectrum><SpectrumRamp /><SpectrumEnds /></Spectrum>
            </ColorPanel>

            <PanelTabs $gap>
              <PanelTab $active>调整</PanelTab>
              <PanelTab>样式</PanelTab>
              <TabsMenu />
            </PanelTabs>
            <AdjustPanel>
              <AdjustTitle>添加调整</AdjustTitle>
              {adjustRows.map((row, r) => (
                <AdjustRow key={r} $inset={row.inset}>
                  {row.items.map(([name, art]) => (
                    <IconButton key={name} aria-label={name}><Icon size={14}>{art}</Icon></IconButton>
                  ))}
                </AdjustRow>
              ))}
            </AdjustPanel>

            <PanelTabs $gap>
              <PanelTab $active>图层</PanelTab>
              <PanelTab>通道</PanelTab>
              <PanelTab>路径</PanelTab>
              <TabsMenu />
            </PanelTabs>
            <LayerTools>
              <Dropdown id="filter" label="图层过滤" value="类型" width={56} icon />
              <IconStrip $before={15} $gap={5}>
                {filterIcons.map(([name, art]) => (
                  <IconButton key={name} aria-label={name}><Icon size={11}>{art}</Icon></IconButton>
                ))}
              </IconStrip>
              <FilterSwitch aria-label="打开过滤" />
            </LayerTools>
            <LayerTools>
              <Dropdown id="blend" label="混合模式" value="正常" width={88} />
              <LayerLabel htmlFor="layer-opacity">不透明度:</LayerLabel>
              <Percent id="layer-opacity" label="不透明度滑块" />
            </LayerTools>
            <LockTools>
              <span>锁定:</span>
              <IconStrip $before={5} $gap={4}>
                {lockIcons.map(([name, art]) => (
                  <IconButton key={name} aria-label={name}><Icon size={11}>{art}</Icon></IconButton>
                ))}
              </IconStrip>
              <LayerLabel htmlFor="layer-fill">填充:</LayerLabel>
              <Percent id="layer-fill" label="填充滑块" />
            </LockTools>
            <LayerList>
              <LayerRow $active>
                <Eye />
                <svg width="18" height="17" fill="none" aria-hidden="true">
                  <path d="M5 1H1v4M13 1h4v4M5 16H1v-4M13 16h4v-4" stroke="#eee" strokeWidth="1.300" />
                  <path d="M3.500 13V3.500H14" stroke="#151515" strokeWidth="1.500" />
                  <rect x="6" y="5.500" width="7" height="7" stroke="#aaa" />
                  <path d="M4.500 4.500h3v3h-3zM11.500 4.500h3v3h-3zM4.500 11h3v3h-3zM11.500 11h3v3h-3z" fill="#8b96a5" />
                </svg>
                <LayerName>圆角矩形 1</LayerName>
              </LayerRow>
              <LayerRow>
                <Eye />
                <LayerThumb />
                <LayerName $italic>背景</LayerName>
                <LayerLock>
                  <svg width="9" height="10" viewBox="0 0 9 10" fill="none" stroke="#c0c0c0" aria-hidden="true">
                    <path d="M1 4.500h7v5H1zM2.500 4.500V3a2 2 0 014 0v1.500M4.500 6v2" />
                  </svg>
                </LayerLock>
              </LayerRow>
            </LayerList>
          </DockColumn>
        </Dock>
      </Workspace>

      <Highlight $x={41} $y={16} $w={91} $h={39} />
      <Highlight $x={0} $y={299} $w={42} $h={27} />
      <Note $x={61} $y={88}>2.点击编辑渐变器</Note>
      <Note $x={52} $y={320}>1.点击渐变工具</Note>
      <Meter />
      <Watermark><b>河南</b>龙网</Watermark>
    </Screen>
  );
}
